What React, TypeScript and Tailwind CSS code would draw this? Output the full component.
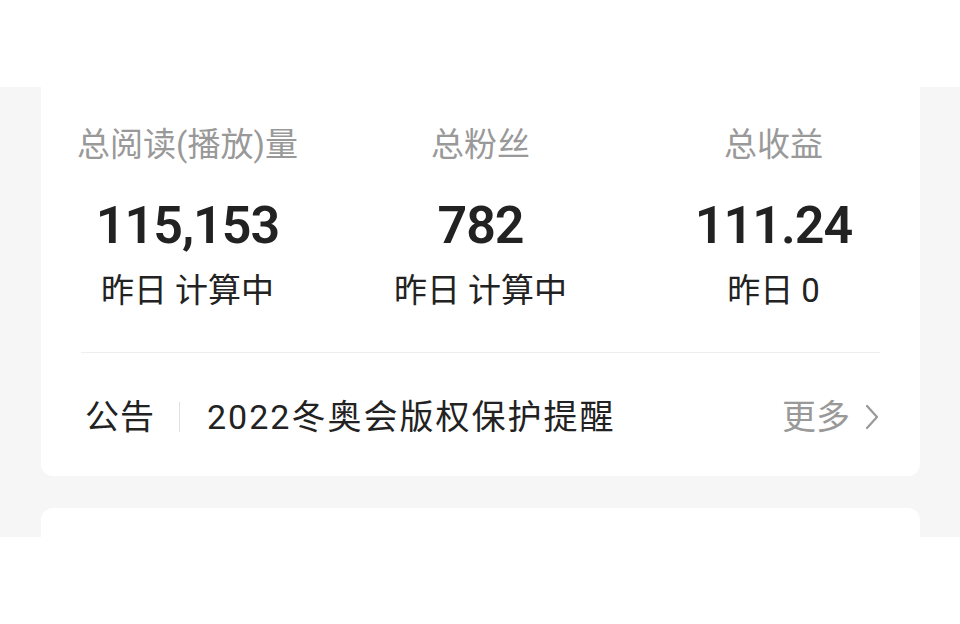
import React from 'react';

const stats = [
  { label: '总阅读(播放)量', value: '115,153', sub: '昨日 计算中' },
  { label: '总粉丝', value: '782', sub: '昨日 计算中' },
  { label: '总收益', value: '111.24', sub: '昨日 0' },
];

const App = () => {
  return (
    <div
      className="h-[624px] w-full overflow-hidden bg-white"
      style={{ fontFamily: 'Roboto, "Noto Sans CJK SC", sans-serif' }}
    >
      {/* top white band */}
      <div className="h-[87px]" />

      {/* gray content area */}
      <div className="h-[450px] overflow-hidden bg-[#f6f6f6] pl-[41px] pr-[40px]">
        <div className="rounded-b-[12px] bg-white px-[40px]">
          {/* stats row */}
          <div className="-mx-[40px] flex pt-[42px]">
            {stats.map((s) => (
              <div key={s.label} className="flex flex-1 flex-col items-center">
                <div className="text-[33px] leading-[32px] text-[#999999]">{s.label}</div>
                <div className="mt-[38px] text-[52px] font-semibold leading-[54px] tracking-[-1px] text-[#222222]">
                  {s.value}
                </div>
                <div className="mt-[22px] text-[33px] leading-[32px] text-[#222222]">{s.sub}</div>
              </div>
            ))}
          </div>

          {/* divider */}
          <div className="mt-[45px] h-px bg-[#eeeeee]" />

          {/* notice row */}
          <div className="flex items-center pb-[43px] pt-[48px]">
            <div className="pl-[4px] text-[34px] leading-[32px] tracking-[1px] text-[#222222]">公告</div>
            <div className="ml-[24px] mr-[27px] h-[30px] w-px bg-[#e2e2e2]" />
            <div className="flex-1 text-[34px] leading-[32px] tracking-[2px] text-[#222222]">
              2022冬奥会版权保护提醒
            </div>
            <div className="flex items-center gap-[14px] text-[34px] leading-[32px] text-[#999999]">
              <span>更多</span>
              <svg width="16" height="26" viewBox="0 0 16 26" fill="none">
                <polyline
                  points="3,2 13,13 3,24"
                  stroke="#999999"
                  strokeWidth="2.2"
                  strokeLinecap="round"
                  strokeLinejoin="round"
                />
              </svg>
            </div>
          </div>
        </div>

        {/* next card (clipped) */}
        <div className="mt-[32px] h-[120px] rounded-t-[12px] bg-white" />
      </div>
    </div>
  );
};

export default App;
